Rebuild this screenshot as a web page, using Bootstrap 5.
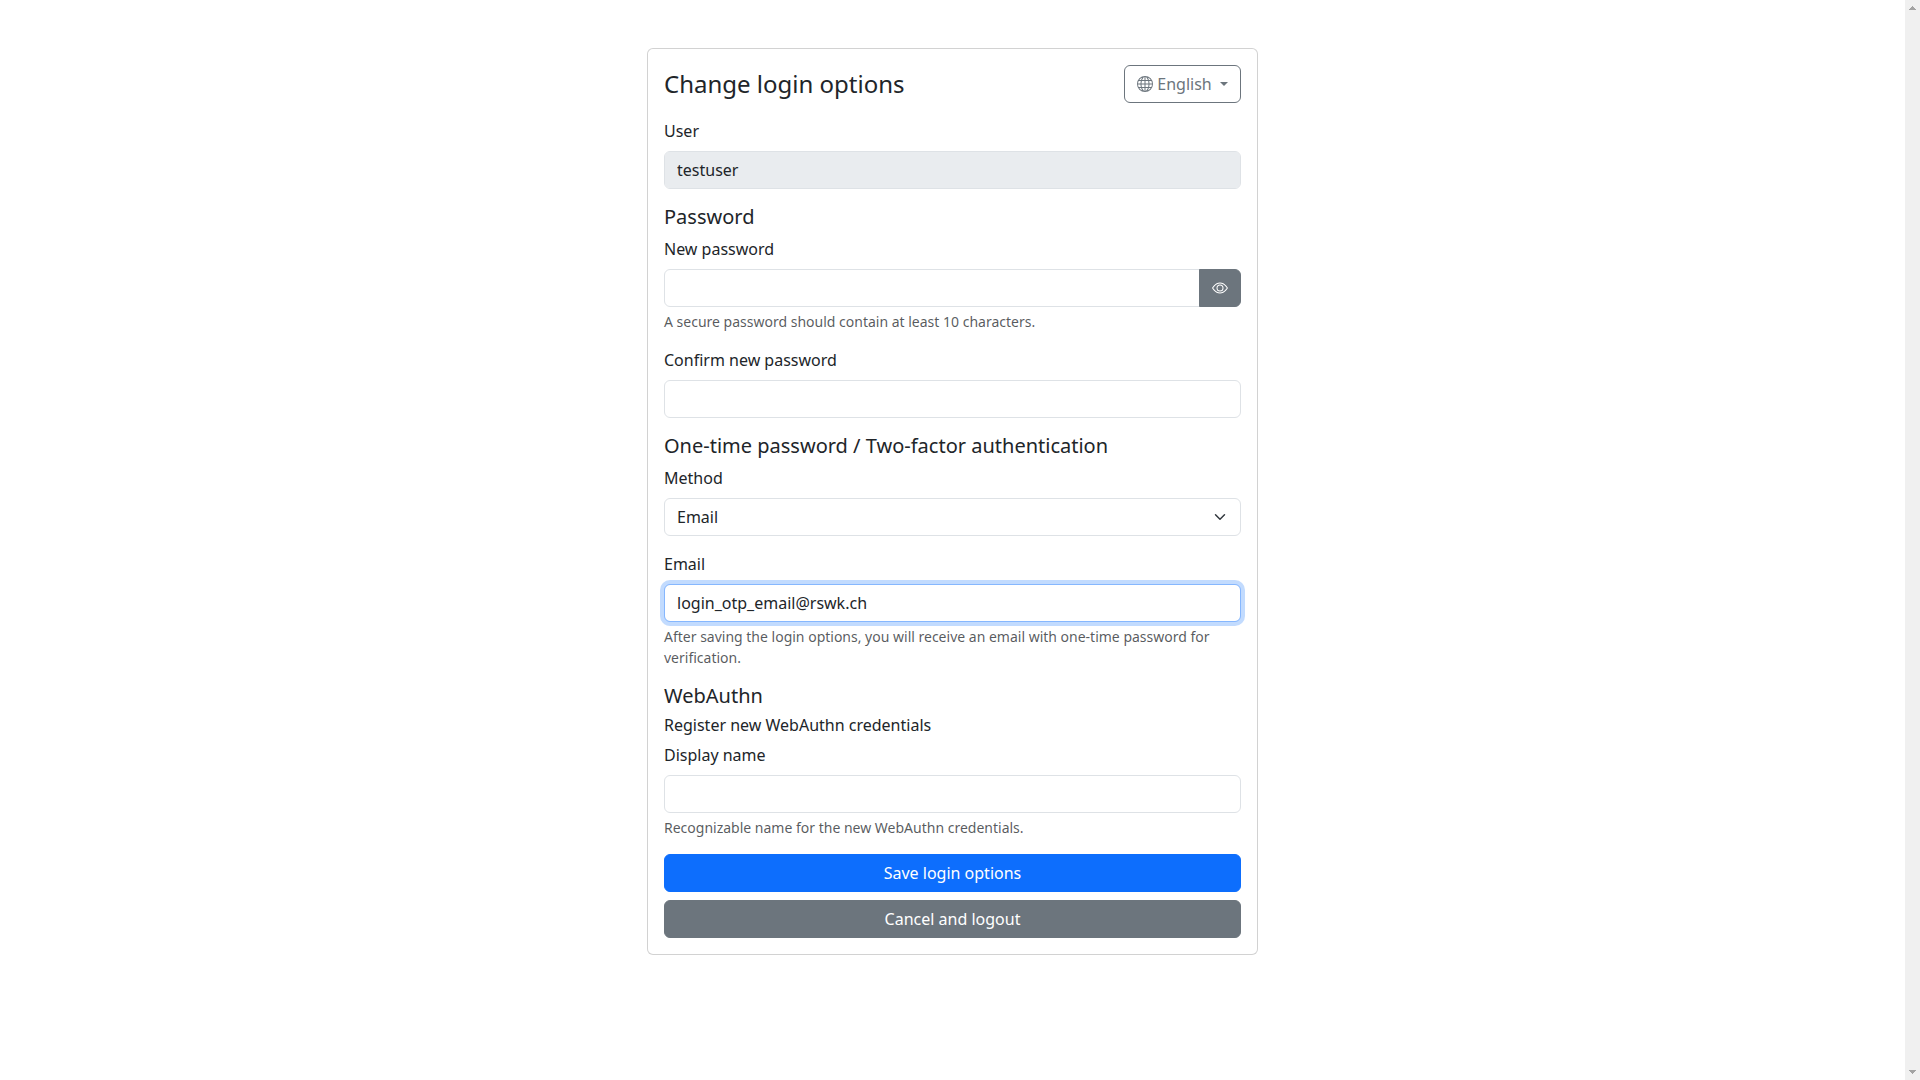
<!DOCTYPE html>
<html lang="en">
<head>
<meta charset="utf-8">
<meta name="viewport" content="width=device-width, initial-scale=1">
<title>Change login options</title>
<link href="https://cdn.jsdelivr.net/npm/bootstrap@5.3.0/dist/css/bootstrap.min.css" rel="stylesheet">
<style>
  body { font-family: "Noto Sans", "Liberation Sans", sans-serif; }
  h1, h2, h3, .h4, .h5, .h6 { font-weight: 400; }
  .bi { width: 1em; height: 1em; vertical-align: -2px; fill: currentColor; }
  .field-active { border-color: #86b7fe; box-shadow: 0 0 0 4px rgba(13, 110, 253, .25); }
  .form-text { color: rgba(33, 37, 41, .75); }
  .scroll-track { width: 15px; background: #f0f0f0; padding: 6px 4px; }
  .scroll-track svg { width: 7px; height: 4px; fill: #a3a3a3; }
</style>
</head>
<body class="d-flex min-vh-100">
<main class="container-fluid flex-grow-1 py-5">
  <div class="row justify-content-center">
    <div class="col-12 col-md-8 col-lg-6 col-xl-4">
      <form class="card">
        <div class="card-body">
          <div class="d-flex justify-content-between align-items-center mb-3">
            <h1 class="h4 mb-0">Change login options</h1>
            <div class="dropdown">
              <button type="button" class="btn btn-outline-secondary dropdown-toggle" data-bs-toggle="dropdown" aria-expanded="false"><svg class="bi" viewBox="0 0 16 16" aria-hidden="true"><path d="M0 8a8 8 0 1 1 16 0A8 8 0 0 1 0 8zm7.5-6.923c-.67.204-1.335.82-1.887 1.855A7.97 7.97 0 0 0 5.145 4H7.5V1.077zM4.09 4a9.267 9.267 0 0 1 .64-1.539 6.7 6.7 0 0 1 .597-.933A7.025 7.025 0 0 0 2.255 4H4.09zm-.582 3.5c.03-.877.138-1.718.312-2.5H1.674a6.958 6.958 0 0 0-.656 2.5h2.49zM4.847 5a12.5 12.5 0 0 0-.338 2.5H7.5V5H4.847zM8.5 5v2.5h2.99a12.495 12.495 0 0 0-.337-2.5H8.5zM4.51 8.5a12.5 12.5 0 0 0 .337 2.5H7.5V8.5H4.51zm3.99 0V11h2.653c.187-.765.306-1.608.338-2.5H8.5zM5.145 12c.138.386.295.744.468 1.068.552 1.035 1.218 1.65 1.887 1.855V12H5.145zm.182 2.472a6.696 6.696 0 0 1-.597-.933A9.268 9.268 0 0 1 4.09 12H2.255a7.024 7.024 0 0 0 3.072 2.472zM3.82 11a13.652 13.652 0 0 1-.312-2.5h-2.49c.062.89.291 1.733.656 2.5H3.82zm6.853 3.472A7.024 7.024 0 0 0 13.745 12H11.91a9.27 9.27 0 0 1-.64 1.539 6.688 6.688 0 0 1-.597.933zM8.5 12v2.923c.67-.204 1.335-.82 1.887-1.855.173-.324.33-.682.468-1.068H8.5zm3.68-1h2.146c.365-.767.594-1.61.656-2.5h-2.49a13.65 13.65 0 0 1-.312 2.5zm2.802-3.5a6.959 6.959 0 0 0-.656-2.5H12.18c.174.782.282 1.623.312 2.5h2.49zM11.27 2.461c.247.464.462.98.64 1.539h1.835a7.024 7.024 0 0 0-3.072-2.472c.218.284.418.598.597.933zM10.855 4a7.966 7.966 0 0 0-.468-1.068C9.835 1.897 9.17 1.282 8.5 1.077V4h2.355z"/></svg> English&nbsp;</button>
            </div>
          </div>

          <div class="mb-3">
            <label class="form-label" for="user">User</label>
            <input class="form-control" id="user" type="text" value="testuser" disabled>
          </div>

          <h2 class="h5">Password</h2>
          <div class="mb-3">
            <label class="form-label" for="new-password">New password</label>
            <div class="input-group">
              <input class="form-control" id="new-password" type="password" autocomplete="new-password">
              <button class="btn btn-secondary" type="button" aria-label="Show password"><svg class="bi" viewBox="0 0 16 16" aria-hidden="true"><path d="M16 8s-3-5.500-8-5.500S0 8 0 8s3 5.500 8 5.500S16 8 16 8zM1.173 8a13.133 13.133 0 0 1 1.660-2.043C4.120 4.668 5.880 3.500 8 3.500c2.120 0 3.879 1.168 5.168 2.457A13.133 13.133 0 0 1 14.828 8c-.058.087-.122.183-.195.288-.335.480-.830 1.120-1.465 1.755C11.879 11.332 10.119 12.500 8 12.500c-2.120 0-3.879-1.168-5.168-2.457A13.134 13.134 0 0 1 1.172 8z"/><path d="M8 5.500a2.500 2.500 0 1 0 0 5 2.500 2.500 0 0 0 0-5zM4.500 8a3.500 3.500 0 1 1 7 0 3.500 3.500 0 0 1-7 0z"/></svg></button>
            </div>
            <div class="form-text">A secure password should contain at least 10 characters.</div>
          </div>
          <div class="mb-3">
            <label class="form-label" for="confirm-password">Confirm new password</label>
            <input class="form-control" id="confirm-password" type="password" autocomplete="new-password">
          </div>

          <h2 class="h5">One-time password / Two-factor authentication</h2>
          <div class="mb-3">
            <label class="form-label" for="method">Method</label>
            <select class="form-select" id="method">
              <option selected>Email</option>
            </select>
          </div>
          <div class="mb-3">
            <label class="form-label" for="email">Email</label>
            <input class="form-control field-active" id="email" type="email" value="login_otp_email@rswk.ch">
            <div class="form-text">After saving the login options, you will receive an email with one-time password for verification.</div>
          </div>

          <h2 class="h5">WebAuthn</h2>
          <h3 class="h6">Register new WebAuthn credentials</h3>
          <div class="mb-3">
            <label class="form-label" for="display-name">Display name</label>
            <input class="form-control" id="display-name" type="text">
            <div class="form-text">Recognizable name for the new WebAuthn credentials.</div>
          </div>

          <div class="d-grid gap-2">
            <button class="btn btn-primary" type="submit">Save login options</button>
            <button class="btn btn-secondary" type="button">Cancel and logout</button>
          </div>
        </div>
      </form>
    </div>
  </div>
</main>
<div class="scroll-track d-flex flex-column justify-content-between flex-shrink-0" aria-hidden="true">
  <svg viewBox="0 0 7 4" shape-rendering="crispEdges"><path d="M3 0h1v1h1v1h1v1h1v1H0V3h1V2h1V1h1z"/></svg>
  <svg viewBox="0 0 7 4" shape-rendering="crispEdges"><path d="M0 0h7v1H6v1H5v1H4v1H3V3H2V2H1V1H0z"/></svg>
</div>
<script src="https://cdn.jsdelivr.net/npm/bootstrap@5.3.0/dist/js/bootstrap.bundle.min.js"></script>
</body>
</html>
